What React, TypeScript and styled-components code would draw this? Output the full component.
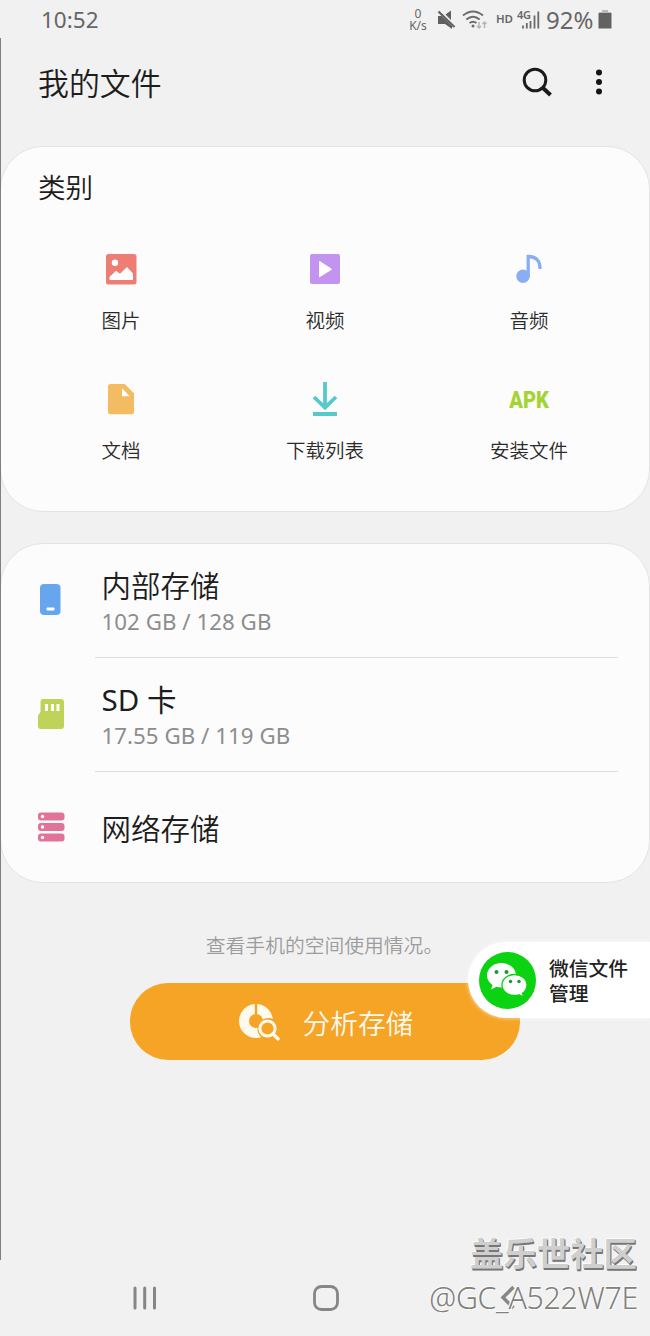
import React from "react";
import styled, { createGlobalStyle } from "styled-components";

const GlobalStyle = createGlobalStyle`
  * { box-sizing: border-box; }
  body { margin: 0; background: #f1f1f1; }
  svg { display: block; flex: none; }
`;

const Screen = styled.main`
  position: relative;
  display: flex;
  flex-direction: column;
  width: 650px;
  height: 1336px;
  overflow: hidden;
  background: #f1f1f1;
  color: #1d1d1d;
  font-family: "Noto Sans", "Noto Sans CJK SC", sans-serif;
`;

const EdgeLine = styled.div`
  position: absolute;
  left: 0;
  top: 38px;
  width: 1px;
  height: 1222px;
  background: #808080;
`;

const StatusBar = styled.header`
  display: flex;
  align-items: center;
  height: 40px;
  padding: 0 38px 0 41px;
  color: #666;
`;

const Clock = styled.span`
  flex: 1;
  font-size: 22.5px;
  line-height: 40px;
`;

const NetSpeed = styled.span`
  display: flex;
  flex-direction: column;
  align-items: center;
  width: 20px;
  margin-right: 9px;
  font-size: 12px;
  line-height: 12px;
`;

const HdTag = styled.span`
  width: 16px;
  margin: -3px 5px 0 8px;
  font-size: 11.5px;
  font-weight: 600;
  line-height: 16px;
  letter-spacing: -0.3px;
`;

const Signal = styled.span`
  position: relative;
  width: 23px;
  height: 20px;
`;

const SignalType = styled.span`
  position: absolute;
  left: 0;
  top: 0;
  font-size: 11px;
  font-weight: 600;
  line-height: 10px;
  letter-spacing: -0.3px;
`;

const Percent = styled.span`
  width: 49px;
  margin: 0 3px 0 6px;
  font-size: 24px;
  line-height: 40px;
`;

const TitleBar = styled.div`
  display: flex;
  align-items: center;
  height: 106px;
  padding: 0 43px 22px 38px;
`;

const Title = styled.h1`
  flex: 1;
  margin: 2px 0 0;
  font-size: 30.9px;
  font-weight: 350;
  line-height: 44px;
`;

const Actions = styled.div`
  display: flex;
  align-items: center;
  gap: 38px;
`;

const Card = styled.section<{ $height: number }>`
  height: ${(p) => p.$height}px;
  margin: 0 0 31px;
  border: 1px solid #e4e4e4;
  border-radius: 43px;
  background: #fcfcfc;
`;

const CardTitle = styled.h2`
  margin: 0;
  padding: 20px 0 0 37px;
  font-size: 27.6px;
  font-weight: 350;
  line-height: 40px;
`;

const Categories = styled.div`
  display: grid;
  grid-template-columns: repeat(3, 204px);
  grid-auto-rows: 130px;
  justify-content: center;
  margin-top: 46px;
`;

const Category = styled.div`
  display: flex;
  flex-direction: column;
  align-items: center;
  gap: 21px;
`;

const CategoryName = styled.span`
  font-size: 19.5px;
  font-weight: 350;
  line-height: 30px;
  color: #2b2b2b;
`;

const ApkIcon = styled.span`
  height: 32px;
  font-family: "Roboto", sans-serif;
  font-size: 24.5px;
  font-weight: 900;
  line-height: 34px;
  color: #a5d334;
  transform: scaleX(0.82);
`;

const StorageRow = styled.div<{ $height: number }>`
  display: flex;
  height: ${(p) => p.$height}px;
  padding-left: 35px;
`;

const StorageIcon = styled.div`
  display: flex;
  align-items: center;
  width: 59px;
  padding-bottom: 2px;
`;

const StorageBody = styled.div<{ $divided?: boolean }>`
  display: flex;
  flex-direction: column;
  justify-content: center;
  width: 523px;
  padding: 2px 0 0 6.5px;
  border-bottom: ${(p) => (p.$divided ? "1px solid #dedede" : "0")};
`;

const StorageName = styled.span<{ $latin?: boolean }>`
  font-size: 29.5px;
  font-weight: ${(p) => (p.$latin ? 400 : 350)};
  line-height: 38px;
`;

const StorageUsage = styled.span`
  position: relative;
  top: 1px;
  font-size: 22.3px;
  line-height: 32px;
  letter-spacing: 0.03px;
  color: #8d8d8d;
`;

const Hint = styled.p`
  margin: 18px 10px 23px 0;
  font-size: 19.8px;
  font-weight: 350;
  line-height: 28px;
  text-align: center;
  color: #9c9c9c;
  padding-left: 9px;
`;

const AnalyzeButton = styled.button`
  display: flex;
  align-items: center;
  align-self: center;
  width: 390px;
  height: 77px;
  padding: 0 0 0 109px;
  gap: 22.500px;
  border: 0;
  border-radius: 38px;
  background: #f5a425;
  color: #fff9ee;
  font-family: inherit;
  font-size: 27.7px;
  font-weight: 350;
`;

const WeChatPill = styled.div`
  position: absolute;
  left: 468px;
  top: 942px;
  display: flex;
  align-items: center;
  gap: 13px;
  width: 182px;
  height: 76px;
  padding-left: 11px;
  border-radius: 38px 0 0 38px;
  background: #fff;
  box-shadow: 0 0 4px rgba(255, 255, 255, 0.7);
  font-size: 19.8px;
  font-weight: 500;
  line-height: 24.5px;
  color: #222;
`;

const PillText = styled.span`
  padding-top: 3px;
`;

const NavBar = styled.nav`
  display: flex;
  align-items: center;
  height: 76px;
  margin-top: auto;
  padding-left: 133px;
`;

const NavItem = styled.span<{ $width: number }>`
  width: ${(p) => p.$width}px;
`;

const Watermark = styled.div`
  position: absolute;
  right: 12px;
  top: 1230px;
  display: flex;
  flex-direction: column;
  align-items: flex-end;
  white-space: nowrap;
`;

const Community = styled.span`
  margin-right: 1px;
  font-size: 33.4px;
  font-weight: 700;
  line-height: 46px;
  color: #cfcfcf;
  text-shadow: 1px 1px 0 #777, 1px 2px 0 #777, -1px -1px 0 #fbfbf7;
`;

const Author = styled.span`
  font-size: 30.3px;
  font-weight: 350;
  line-height: 44px;
  letter-spacing: -0.3px;
  color: #808080;
  text-shadow: -1px -1px 0 #fbfbf7, 1px 1px 0 #fbfbf7;
`;

const ImageIcon = () => (
  <svg width="32" height="32" viewBox="0 0 32 32">
    <rect x="1" y="1" width="30.5" height="30.5" rx="2.5" fill="#ee7d74" />
    <circle cx="10" cy="9.8" r="3.2" fill="#fff" />
    <path d="M4.500 24 11 17.800l4 3L22 14l6 6.500V27H4.500z" fill="#fff" />
  </svg>
);

const VideoIcon = () => (
  <svg width="32" height="32" viewBox="0 0 32 32">
    <rect x="1" y="1" width="30" height="30" rx="2" fill="#c394ef" />
    <path d="M10 9v14.500q0 1.200 1 .6L22.300 17q1-.8 0-1.500L11 8.200q-1-.5-1 .8z" fill="#fff" />
  </svg>
);

const MusicIcon = () => (
  <svg width="32" height="32" viewBox="0 0 32 32" fill="none">
    <circle cx="10" cy="23.300" r="6.700" fill="#8aadf4" />
    <path d="M15.200 24V3.500h.8C22.500 3.500 27.300 7.500 27 16" stroke="#8aadf4" strokeWidth="3.300" />
  </svg>
);

const DocIcon = () => (
  <svg width="32" height="32" viewBox="0 0 32 32">
    <path d="M5.500 1h14.200L29 10.300v18.500A2.500 2.500 0 0 1 26.500 31.300h-21A2.500 2.500 0 0 1 3 28.800V3.500A2.500 2.500 0 0 1 5.500 1z" fill="#f3bb62" />
    <path d="M17 5.200v8h7.700z" fill="#fff" />
  </svg>
);

const DownloadIcon = () => (
  <svg width="32" height="36" viewBox="0 0 32 36" fill="none" stroke="#57c8cc" strokeWidth="3.800">
    <path d="M16 1v24M5 16l11 10.500L27 16M4 33h24" />
  </svg>
);

const PhoneIcon = () => (
  <svg width="30" height="34" viewBox="0 0 30 34">
    <rect x="4" y="1" width="20.500" height="31" rx="4" fill="#67a6ef" />
    <rect x="10.500" y="24.500" width="8" height="3" rx="1" fill="#fff" />
  </svg>
);

const SdIcon = () => (
  <svg width="30" height="32" viewBox="0 0 30 32">
    <path d="M7 1h18q3 0 3 3v24q0 3-3 3H5q-3 0-3-3V17.500L4.500 14V4Q4.500 1 7 1z" fill="#bed358" />
    <path d="M10.500 6v7M16.500 6v7M22 6v7" stroke="#fff" strokeWidth="3" />
  </svg>
);

const ServerIcon = () => (
  <svg width="30" height="32" viewBox="0 0 30 32">
    {[1.5, 12, 22.5].map((y) => (
      <g key={y}>
        <rect x="2" y={y} width="26.500" height="8" rx="3" fill="#e17399" />
        <circle cx="6.500" cy={y + 4} r="1.700" fill="#fff" />
      </g>
    ))}
  </svg>
);

const SearchIcon = () => (
  <svg width="32" height="32" viewBox="0 0 32 32" fill="none" stroke="#1b1b1b">
    <circle cx="14" cy="14" r="10.800" strokeWidth="3" />
    <path d="m21.500 21.500 8 7.500" strokeWidth="4" />
  </svg>
);

const MoreIcon = () => (
  <svg width="16" height="32" viewBox="0 0 16 32" fill="#151515">
    <circle cx="8" cy="6.500" r="3" />
    <circle cx="8" cy="16" r="3" />
    <circle cx="8" cy="25.500" r="3" />
  </svg>
);

const MuteIcon = () => (
  <svg width="20" height="20" viewBox="0 0 20 20" fill="#606060">
    <path d="M1 6h3.500L15 16v3l-7-5H1z" />
    <path d="M8.500 4.500 14 .5v9.500z" />
    <path d="m1.500 1.500 16 15.500" stroke="#606060" strokeWidth="2.400" />
    <path d="m3.300 1 14.500 14" stroke="#f1f1f1" strokeWidth="1" />
  </svg>
);

const WifiIcon = () => (
  <svg width="26" height="20" viewBox="0 0 26 20" fill="none" stroke="#6c6c6c" strokeWidth="1.900">
    <path d="M1 5.500q10-8 20 0M4.300 9.500q6.700-5.500 13.400 0M7.500 13q3.500-2.700 7 0" />
    <circle cx="11" cy="16" r="1.500" fill="#6c6c6c" stroke="none" />
    <path d="M17 12v6m-2-2 2 2 2-2M22.500 18v-6m-2 2 2-2 2 2" stroke="#b5b5b5" strokeWidth="1.500" />
  </svg>
);

const SignalBars = () => (
  <svg width="23" height="20" viewBox="0 0 23 20" stroke="#6a6a6a" strokeWidth="1.800">
    <path d="M6 15.500v3M9.800 13v5.500M13.500 11v7.500M17.500 5.500v13M21.300 1.500v17" />
  </svg>
);

const BatteryIcon = () => (
  <svg width="14" height="20" viewBox="0 0 14 20">
    <path d="M4 0h6v2h3v3H1V2h3z" fill="#b8b8b8" />
    <path d="M.5 3h13v15.500H.5z" fill="#626262" />
  </svg>
);

const AnalyzeIcon = () => (
  <svg width="41" height="40" viewBox="0 0 41 40" fill="none" stroke="#fff9ee">
    <circle cx="17" cy="19" r="12" strokeWidth="10" />
    <path d="M17 0v14" stroke="#f5a425" strokeWidth="2.400" />
    <circle cx="29.500" cy="27" r="11" fill="#f5a425" stroke="none" />
    <circle cx="28.500" cy="26.500" r="7.600" strokeWidth="3" />
    <path d="m34 32 5 4.700" strokeWidth="3.500" strokeLinecap="round" />
  </svg>
);

const WeChatIcon = () => (
  <svg width="57" height="57" viewBox="0 0 57 57">
    <circle cx="28.500" cy="28.500" r="28.500" fill="#0bd312" />
    <path d="M22.500 11C14.500 11 8 16.500 8 23.500c0 4 2 7 5.500 9.500l-1.500 4.500 5.500-2.800q2.500.8 5 .8c8 0 14.500-5.300 14.500-12S30.500 11 22.500 11z" fill="#fff" />
    <path d="M35.500 22.500c-7 0-12.500 4.700-12.500 10.500s5.500 10.500 12.500 10.500q2.500 0 4.500-.700l4.500 2.200-1-3.800c3-2 4.500-5 4.500-8.200 0-5.800-5.500-10.500-12.500-10.500z" fill="#fff" stroke="#0bd312" strokeWidth="1.300" />
    <g fill="#159b35">
      <circle cx="17.500" cy="20" r="2" />
      <circle cx="27.500" cy="20" r="2" />
      <circle cx="31.500" cy="29.500" r="1.700" />
      <circle cx="40" cy="29.500" r="1.700" />
    </g>
  </svg>
);

const RecentsIcon = () => (
  <svg width="24" height="26" viewBox="0 0 24 26" stroke="#868686" strokeWidth="3" strokeLinecap="round">
    <path d="M2 3v20M11.700 3v20M21.500 3v20" />
  </svg>
);

const HomeIcon = () => (
  <svg width="26" height="26" viewBox="0 0 26 26" fill="none">
    <rect x="1.500" y="1.500" width="23" height="23" rx="7" stroke="#868686" strokeWidth="2.800" />
  </svg>
);

const BackIcon = () => (
  <svg width="16" height="26" viewBox="0 0 16 26" fill="none" stroke="#868686" strokeWidth="3.500">
    <path d="M13.500 2 3 12.500 13.500 23" />
  </svg>
);

const IconSlot = styled.span`
  display: flex;
  align-items: center;
  height: 32px;
`;

const categories = [
  { name: "图片", icon: <ImageIcon /> },
  { name: "视频", icon: <VideoIcon /> },
  { name: "音频", icon: <MusicIcon /> },
  { name: "文档", icon: <DocIcon /> },
  { name: "下载列表", icon: <DownloadIcon /> },
  { name: "安装文件", icon: <ApkIcon>APK</ApkIcon> },
];

const storages = [
  { name: "内部存储", usage: "102 GB / 128 GB", icon: <PhoneIcon />, height: 114 },
  { name: "SD 卡", latin: true, usage: "17.55 GB / 119 GB", icon: <SdIcon />, height: 114 },
  { name: "网络存储", icon: <ServerIcon />, height: 112 },
];

export default function App() {
  return (
    <>
      <GlobalStyle />
      <Screen>
        <StatusBar>
          <Clock>10:52</Clock>
          <NetSpeed>
            <span>0</span>
            <span>K/s</span>
          </NetSpeed>
          <MuteIcon />
          <svg width="5" height="1" />
          <WifiIcon />
          <HdTag>HD</HdTag>
          <Signal>
            <SignalBars />
            <SignalType>4G</SignalType>
          </Signal>
          <Percent>92%</Percent>
          <BatteryIcon />
        </StatusBar>

        <TitleBar>
          <Title>我的文件</Title>
          <Actions>
            <SearchIcon />
            <MoreIcon />
          </Actions>
        </TitleBar>

        <Card $height={366}>
          <CardTitle>类别</CardTitle>
          <Categories>
            {categories.map((c) => (
              <Category key={c.name}>
                <IconSlot>{c.icon}</IconSlot>
                <CategoryName>{c.name}</CategoryName>
              </Category>
            ))}
          </Categories>
        </Card>

        <Card $height={340}>
          {storages.map((s) => (
            <StorageRow key={s.name} $height={s.height}>
              <StorageIcon>{s.icon}</StorageIcon>
              <StorageBody $divided={Boolean(s.usage)}>
                <StorageName $latin={s.latin}>{s.name}</StorageName>
                {s.usage && <StorageUsage>{s.usage}</StorageUsage>}
              </StorageBody>
            </StorageRow>
          ))}
        </Card>

        <Hint>查看手机的空间使用情况。</Hint>
        <AnalyzeButton>
          <AnalyzeIcon />
          分析存储
        </AnalyzeButton>

        <NavBar>
          <NavItem $width={180}>
            <RecentsIcon />
          </NavItem>
          <NavItem $width={187}>
            <HomeIcon />
          </NavItem>
          <BackIcon />
        </NavBar>

        <WeChatPill>
          <WeChatIcon />
          <PillText>
            微信文件
            <br />
            管理
          </PillText>
        </WeChatPill>
        <Watermark>
          <Community>盖乐世社区</Community>
          <Author>@GC_A522W7E</Author>
        </Watermark>
        <EdgeLine />
      </Screen>
    </>
  );
}
